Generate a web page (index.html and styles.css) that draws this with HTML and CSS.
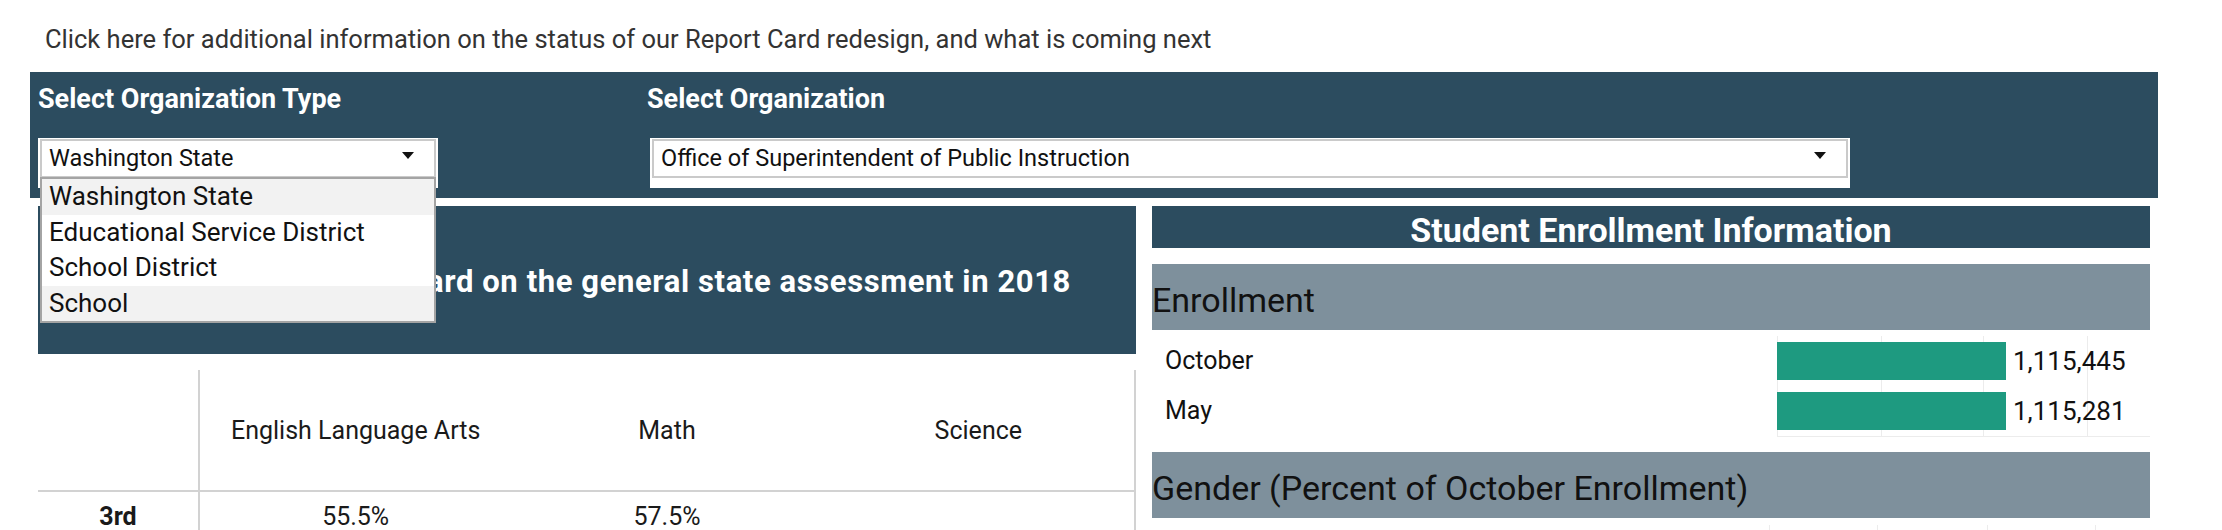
FILE: index.html
```html
<!DOCTYPE html>
<html lang="en">
<head>
<meta charset="utf-8">
<title>Report Card</title>
<link rel="stylesheet" href="styles.css">
</head>
<body>
<div class="page">
  <p class="notice">Click here for additional information on the status of our Report Card redesign, and what is coming next</p>

  <section class="filters">
    <div class="filter filter-type">
      <div class="filter-label">Select Organization Type</div>
      <div class="select">
        <div class="select-field">
          <span>Washington State</span>
          <svg class="caret" width="12" height="7" viewBox="0 0 12 7"><path d="M0 0H12L6 7Z" fill="#111"/></svg>
        </div>
        <ul class="select-list">
          <li class="opt hl">Washington State</li>
          <li class="opt">Educational Service District</li>
          <li class="opt">School District</li>
          <li class="opt hl">School</li>
        </ul>
      </div>
    </div>
    <div class="filter filter-org">
      <div class="filter-label">Select Organization</div>
      <div class="select">
        <div class="select-field">
          <span>Office of Superintendent of Public Instruction</span>
          <svg class="caret" width="12" height="7" viewBox="0 0 12 7"><path d="M0 0H12L6 7Z" fill="#111"/></svg>
        </div>
      </div>
    </div>
  </section>

  <div class="panels">
    <div class="left">
      <div class="title"><span class="title-text">Percent of students meeting standard on the general state assessment in 2018</span></div>
      <div class="grid">
        <div class="grid-row grid-head">
          <div class="cell rowhead"></div>
          <div class="cell">English Language Arts</div>
          <div class="cell">Math</div>
          <div class="cell">Science</div>
        </div>
        <div class="grid-row grid-body">
          <div class="cell rowhead">3rd</div>
          <div class="cell">55.5%</div>
          <div class="cell">57.5%</div>
          <div class="cell"></div>
        </div>
      </div>
    </div>

    <div class="right">
      <div class="rhead">Student Enrollment Information</div>
      <div class="band">Enrollment</div>
      <div class="enroll">
        <div class="enroll-labels">
          <div class="enroll-label">October</div>
          <div class="enroll-label">May</div>
        </div>
        <div class="enroll-bars">
          <div class="bar-row"><div class="bar" style="width:229px"></div><span class="bar-value">1,115,445</span></div>
          <div class="bar-row"><div class="bar" style="width:229px"></div><span class="bar-value">1,115,281</span></div>
        </div>
      </div>
      <div class="band band-gender">Gender (Percent of October Enrollment)</div>
      <div class="gender-grid"></div>
    </div>
  </div>
</div>
</body>
</html>
```

FILE: styles.css
```css
html, body {
  margin: 0;
  padding: 0;
  background: #ffffff;
}
body {
  width: 2222px;
  height: 530px;
  overflow: hidden;
  font-family: Roboto, "Liberation Sans", sans-serif;
  color: #111;
}
.page {
  padding: 24px 0 0 30px;
}
.notice {
  margin: 0 0 18px;
  padding-left: 15px;
  font-size: 25.5px;
  line-height: 30px;
  color: #333;
  white-space: nowrap;
}

/* filter banner */
.filters {
  width: 2128px;
  height: 126px;
  box-sizing: border-box;
  background: #2c4c5f;
  padding: 11px 8px 0;
  display: flex;
  gap: 212px;
}
.filter-type { width: 400px; }
.filter-org { width: 1200px; }
.filter-label {
  color: #fff;
  font-weight: 700;
  font-size: 27px;
  line-height: 32px;
  margin-bottom: 23px;
  white-space: nowrap;
}
.filter-org .filter-label { margin-left: -3px; }
.select {
  position: relative;
  height: 50px;
  box-sizing: border-box;
  background: #fff;
  padding: 1px 2px;
}
.select-field {
  height: 39px;
  box-sizing: border-box;
  border: 2px solid #cacaca;
  display: flex;
  justify-content: space-between;
  padding: 0 20px 0 7px;
  font-size: 23.5px;
  line-height: 35px;
  color: #111;
  white-space: nowrap;
}
.caret {
  flex: none;
  margin-top: 11px;
}
.select-list {
  position: absolute;
  top: 39px;
  left: 2px;
  width: 396px;
  box-sizing: border-box;
  margin: 0;
  padding: 0;
  list-style: none;
  border: 2px solid #a4a4a4;
  background: #fff;
  z-index: 5;
}
.opt {
  height: 35.5px;
  line-height: 35.5px;
  padding-left: 7px;
  font-size: 26px;
  color: #111;
  white-space: nowrap;
}
.opt.hl { background: #f2f2f2; }

/* panels */
.panels {
  display: flex;
  gap: 16px;
  margin: 8px 0 0 8px;
}
.left { width: 1098px; }
.right { width: 998px; }

.title {
  height: 148px;
  box-sizing: border-box;
  background: #2c4c5f;
  color: #fff;
  font-weight: 700;
  font-size: 31px;
  letter-spacing: 0.6px;
  line-height: 144px;
  padding: 4px 65px 0 0;
  display: flex;
  justify-content: flex-end;
  white-space: nowrap;
  overflow: hidden;
}
.title-text { flex: none; }
.grid {
  margin-top: 16px;
  border-right: 2px solid #d2d2d2;
}
.grid-row {
  display: grid;
  grid-template-columns: 162px 1fr 1fr 1fr;
}
.grid-head {
  height: 122px;
  box-sizing: border-box;
  border-bottom: 2px solid #d2d2d2;
}
.grid-body { height: 60px; }
.cell {
  display: flex;
  align-items: center;
  justify-content: center;
  font-size: 25px;
  color: #1a1a1a;
  white-space: nowrap;
}
.cell.rowhead {
  border-right: 2px solid #d2d2d2;
  font-weight: 700;
}
.grid-body .cell {
  align-items: flex-start;
  padding-top: 10.35px;
  box-sizing: border-box;
}

.rhead {
  height: 42px;
  box-sizing: border-box;
  background: #2c4c5f;
  color: #fff;
  font-weight: 700;
  font-size: 34px;
  line-height: 36px;
  padding-top: 6px;
  text-align: center;
  white-space: nowrap;
}
.band {
  margin-top: 16px;
  height: 66px;
  box-sizing: border-box;
  background: #7e909c;
  padding-top: 16px;
  font-size: 34px;
  line-height: 40px;
  color: #111;
  white-space: nowrap;
}
.band-gender { margin-top: 15px; }

.enroll {
  display: flex;
  margin-top: 6px;
}
.enroll-labels { width: 625px; }
.enroll-label {
  height: 50px;
  line-height: 50px;
  padding-left: 13px;
  font-size: 25px;
  color: #111;
}
.enroll-bars {
  width: 373px;
  border-bottom: 1px solid #ececec;
  background-image:
    linear-gradient(#ececec, #ececec),
    linear-gradient(#ececec, #ececec),
    linear-gradient(#ececec, #ececec),
    linear-gradient(#ececec, #ececec);
  background-size: 1px 100%;
  background-position: 0 0, 104px 0, 206px 0, 310px 0;
  background-repeat: no-repeat;
}
.bar-row {
  height: 50px;
  display: flex;
  align-items: center;
}
.bar {
  height: 38px;
  background: #1e9a80;
  flex: none;
}
.bar-value {
  margin-left: 7px;
  font-size: 26px;
  color: #111;
  white-space: nowrap;
}
.gender-grid {
  margin-top: 7px;
  height: 40px;
  background-image:
    linear-gradient(#ececec, #ececec),
    linear-gradient(#ececec, #ececec),
    linear-gradient(#ececec, #ececec),
    linear-gradient(#ececec, #ececec);
  background-size: 1px 100%;
  background-position: 617px 0, 725px 0, 835px 0, 943px 0;
  background-repeat: no-repeat;
}
```
